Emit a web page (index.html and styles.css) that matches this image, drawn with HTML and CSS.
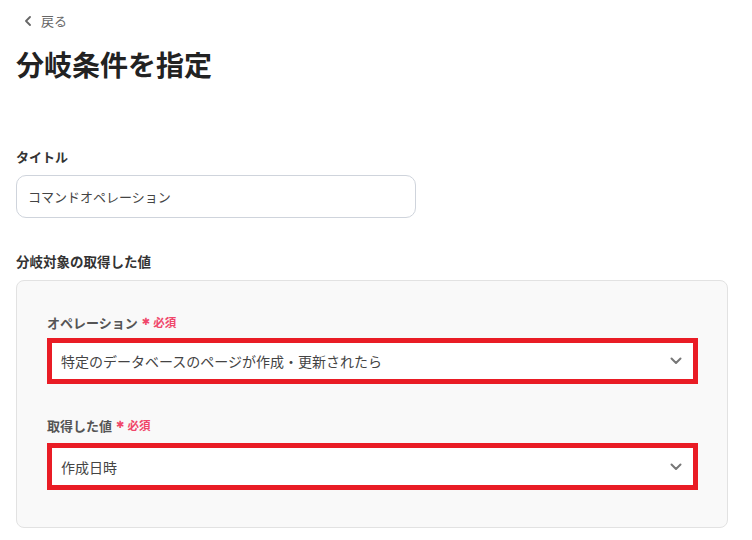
FILE: index.html
```html
<!DOCTYPE html>
<html lang="ja">
<head>
<meta charset="utf-8">
<title>分岐条件を指定</title>
<link rel="stylesheet" href="styles.css">
</head>
<body>
<div class="page">
  <a class="back" href="#">
    <svg class="back-icon" width="8" height="10" viewBox="0 0 8 10"><path d="M6 1 L2 5 L6 9" fill="none" stroke="#666" stroke-width="1.8" stroke-linecap="round" stroke-linejoin="round"/></svg>
    <span>戻る</span>
  </a>
  <h1 class="heading">分岐条件を指定</h1>

  <div class="section-label label-title">タイトル</div>
  <div class="text-input">コマンドオペレーション</div>

  <div class="section-label label-target">分岐対象の取得した値</div>
  <div class="panel">
    <div class="field">
      <div class="field-label">オペレーション<span class="req"><span class="star">✱</span>必須</span></div>
      <div class="select hl">
        <span class="select-text">特定のデータベースのページが作成・更新されたら</span>
        <svg class="chev" width="12" height="8" viewBox="0 0 12 8"><path d="M1.5 1.5 L6 6 L10.5 1.5" fill="none" stroke="#777" stroke-width="2" stroke-linecap="round" stroke-linejoin="round"/></svg>
      </div>
    </div>
    <div class="field field-2">
      <div class="field-label">取得した値<span class="req"><span class="star">✱</span>必須</span></div>
      <div class="select hl hl-2">
        <span class="select-text">作成日時</span>
        <svg class="chev" width="12" height="8" viewBox="0 0 12 8"><path d="M1.5 1.5 L6 6 L10.5 1.5" fill="none" stroke="#777" stroke-width="2" stroke-linecap="round" stroke-linejoin="round"/></svg>
      </div>
    </div>
  </div>
</div>
</body>
</html>
```

FILE: styles.css
```css
* { box-sizing: border-box; }
html, body { margin: 0; padding: 0; background: #fff; }
body {
  font-family: "Noto Sans CJK JP", "Noto Sans", sans-serif;
  color: #333;
  width: 752px;
  height: 540px;
  overflow: hidden;
}
.page { padding: 11px 24px 0 16px; }

.back {
  display: flex;
  align-items: center;
  gap: 9px;
  height: 20px;
  padding-left: 8px;
  color: #666;
  font-size: 13px;
  line-height: 20px;
  text-decoration: none;
}
.back-icon { display: block; }

.heading {
  margin: 13px 0 0;
  font-size: 28px;
  line-height: 40px;
  font-weight: 700;
  color: #222;
  letter-spacing: 0;
}

.section-label {
  font-size: 13px;
  line-height: 20px;
  font-weight: 700;
  color: #333;
}
.label-title { margin-top: 63px; }
.label-target { margin-top: 33px; font-size: 13.5px; }

.text-input {
  margin-top: 8px;
  width: 400px;
  height: 43px;
  border: 1px solid #cfd4dc;
  border-radius: 10px;
  padding: 0 11px;
  display: flex;
  align-items: center;
  font-size: 13px;
  color: #444;
}

.panel {
  margin-top: 9px;
  width: 712px;
  height: 248px;
  background: #f9f9f9;
  border: 1px solid #e2e2e2;
  border-radius: 8px;
  padding: 31px 29px 0 30px;
}

.field-label {
  display: flex;
  align-items: center;
  height: 20px;
  font-size: 13px;
  font-weight: 700;
  color: #555;
}
.req {
  display: inline-flex;
  align-items: center;
  margin-left: 4px;
  color: #f0476a;
  font-size: 11.5px;
  font-weight: 700;
}
.star {
  font-family: "DejaVu Sans", sans-serif;
  font-size: 10px;
  margin-right: 3px;
  line-height: 1;
}

.select {
  margin-top: 6px;
  height: 46px;
  background: #fff;
  display: flex;
  align-items: center;
  justify-content: space-between;
  padding: 0 11px 0 9px;
  font-size: 14px;
  color: #444;
}
.hl { border: 5px solid #e91c25; }
.field-2 { margin-top: 31px; }
.hl-2 { margin-top: 8px; height: 47px; }
.chev { display: block; }
```
